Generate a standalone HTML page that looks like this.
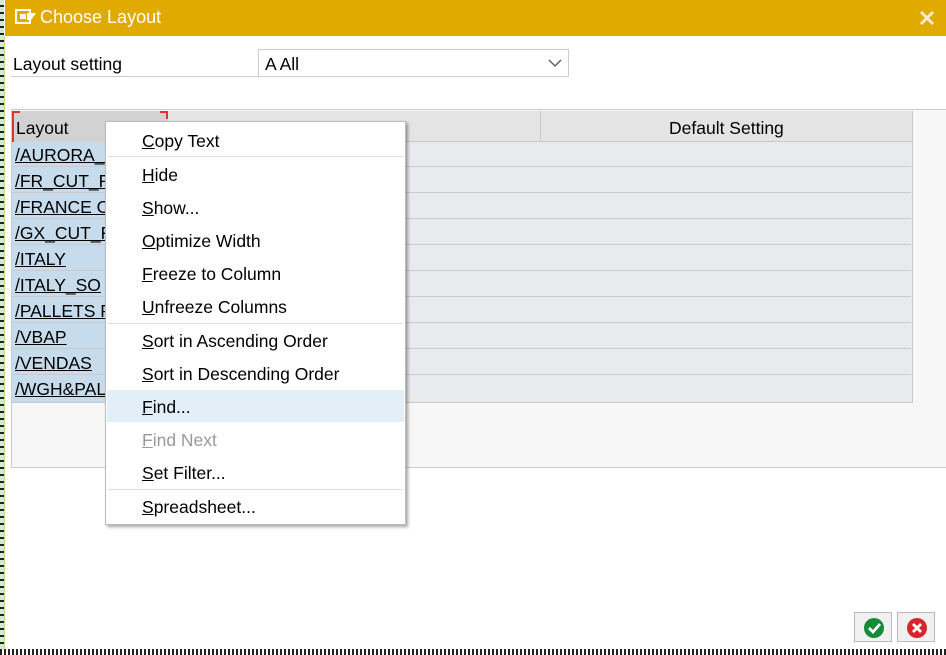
<!DOCTYPE html>
<html><head><meta charset="utf-8"><style>
*{margin:0;padding:0;box-sizing:border-box}
body{width:946px;height:655px;overflow:hidden;background:#fff;font-family:"Liberation Sans",Tahoma,sans-serif;font-size:17.5px;color:#000;position:relative}
.abs{position:absolute}
.strip{left:0;top:0;width:4px;height:655px;background:repeating-linear-gradient(#cfeccc 0 5px,#222 5px 7px);}
.strip2{left:4px;top:36px;width:1px;height:613px;background:#d8d080}
.bot{left:0;top:649px;width:946px;height:6px;background:repeating-linear-gradient(90deg,#222 0 2px,#fff 2px 4px)}
.dlg{left:5px;top:0;width:941px;height:649px;background:#fff}
.title{left:5px;top:0;width:941px;height:36px;background:#e0aa00;color:#fff;font-size:18px}
u{text-decoration:underline}
.row{position:absolute;left:0;height:26px;border-bottom:1px solid #c8cbd0}
.menu{left:105px;top:121px;width:301px;height:404px;background:#fff;border:1px solid #bbb;box-shadow:2px 2px 3px rgba(0,0,0,.35)}
.mi{position:absolute;left:36px}
.sep{position:absolute;left:2px;width:295px;height:1px;background:#ddd}
.btn{top:612px;width:38px;height:30px;background:#f0f0f0;border:1px solid #bbb}
</style></head><body>
<div class="abs strip"></div>
<div class="abs dlg"></div>
<div class="abs strip2"></div>
<div class="abs title">
  <svg class="abs" style="left:10px;top:9px" width="22" height="16"><rect x="1" y="1" width="14" height="13" fill="none" stroke="#fff" stroke-width="2"/><rect x="5" y="5" width="6" height="5" fill="#fff"/><path d="M12 4h9l-5 7h-4z" fill="#fff"/></svg>
  <span class="abs" style="left:35px;top:7px">Choose Layout</span>
  <svg class="abs" style="left:914px;top:10px" width="16" height="16"><path d="M2 2L14 14M14 2L2 14" stroke="#f4ead0" stroke-width="3"/></svg>
</div>
<div class="abs" style="left:13px;top:54px">Layout setting</div>
<div class="abs" style="left:11px;top:76px;width:247px;height:1px;background:#ccc"></div>
<div class="abs" style="left:258px;top:49px;width:311px;height:28px;border:1px solid #ccc;background:#fff">
  <span class="abs" style="left:6px;top:4px">A All</span>
  <svg class="abs" style="left:289px;top:9px" width="14" height="9"><path d="M1 1L7 7L13 1" fill="none" stroke="#555" stroke-width="1.3"/></svg>
</div>
<div class="abs" style="left:11px;top:109px;width:935px;height:359px;background:#f7f7f7;border:1px solid #ccc;border-right:none">
  <div class="abs" style="left:0;top:1px;width:900px;height:31px;background:#e4e4e4;border-bottom:1px solid #c8c8c8"></div>
  <div class="abs" style="left:0;top:1px;width:156px;height:31px;background:#d2d2d2"></div>
  <div class="abs" style="left:0;top:1px;width:8px;height:2px;background:#d33"></div>
  <div class="abs" style="left:0;top:1px;width:2px;height:31px;background:#d33"></div>
  <div class="abs" style="left:148px;top:1px;width:8px;height:2px;background:#d33"></div>
  <div class="abs" style="left:154px;top:1px;width:2px;height:8px;background:#d33"></div>
  <span class="abs" style="left:4px;top:8px">Layout</span>
  <span class="abs" style="left:657px;top:8px">Default Setting</span>
  <div class="abs" style="left:528px;top:1px;width:1px;height:291px;background:#c8c8c8"></div>
  <div class="abs" style="left:0;top:32px;width:900px;height:260px;background:#e8eaed"></div>
  <div class="abs" style="left:0;top:32px;width:156px;height:260px;background:#c6dcec"></div>
  <div class="abs" style="left:900px;top:1px;width:1px;height:291px;background:#c8c8c8"></div>
  <div class="abs" style="left:0;top:292px;width:901px;height:1px;background:#c8c8c8"></div>
</div>
<div class="abs" style="left:11px;top:141px;width:900px">
  <div class="row" style="top:0;width:900px"></div><div class="row" style="top:26px;width:900px"></div><div class="row" style="top:52px;width:900px"></div><div class="row" style="top:78px;width:900px"></div><div class="row" style="top:104px;width:900px"></div><div class="row" style="top:130px;width:900px"></div><div class="row" style="top:156px;width:900px"></div><div class="row" style="top:182px;width:900px"></div><div class="row" style="top:208px;width:900px"></div>
  <span class="abs" style="left:4px;top:4px"><u>/AURORA_I</u></span>
  <span class="abs" style="left:4px;top:30px"><u>/FR_CUT_R</u></span>
  <span class="abs" style="left:4px;top:56px"><u>/FRANCE O</u></span>
  <span class="abs" style="left:4px;top:82px"><u>/GX_CUT_F</u></span>
  <span class="abs" style="left:4px;top:108px"><u>/ITALY</u></span>
  <span class="abs" style="left:4px;top:134px"><u>/ITALY_SO</u></span>
  <span class="abs" style="left:4px;top:160px"><u>/PALLETS P</u></span>
  <span class="abs" style="left:4px;top:186px"><u>/VBAP</u></span>
  <span class="abs" style="left:4px;top:212px"><u>/VENDAS</u></span>
  <span class="abs" style="left:4px;top:238px"><u>/WGH&amp;PAL</u></span>
</div>
<div class="abs menu">
  <span class="mi" style="top:9px"><u>C</u>opy Text</span>
  <div class="sep" style="top:34px"></div>
  <span class="mi" style="top:43px"><u>H</u>ide</span>
  <span class="mi" style="top:76px"><u>S</u>how...</span>
  <span class="mi" style="top:109px"><u>O</u>ptimize Width</span>
  <span class="mi" style="top:142px"><u>F</u>reeze to Column</span>
  <span class="mi" style="top:175px"><u>U</u>nfreeze Columns</span>
  <div class="sep" style="top:201px"></div>
  <span class="mi" style="top:209px"><u>S</u>ort in Ascending Order</span>
  <span class="mi" style="top:242px"><u>S</u>ort in Descending Order</span>
  <div class="abs" style="left:1px;top:268px;width:297px;height:32px;background:#e3eff8"></div>
  <span class="mi" style="top:275px"><u>F</u>ind...</span>
  <span class="mi" style="top:308px;color:#999"><u>F</u>ind Next</span>
  <span class="mi" style="top:341px"><u>S</u>et Filter...</span>
  <div class="sep" style="top:367px"></div>
  <span class="mi" style="top:375px"><u>S</u>preadsheet...</span>
</div>
<div class="abs btn" style="left:854px">
  <svg class="abs" style="left:8px;top:4px" width="22" height="22"><circle cx="11" cy="11" r="10" fill="#178a3a"/><path d="M6 11l4 4 7-8" fill="none" stroke="#fff" stroke-width="2.8"/></svg>
</div>
<div class="abs btn" style="left:897px">
  <svg class="abs" style="left:8px;top:4px" width="22" height="22"><circle cx="11" cy="11" r="10" fill="#d9232e"/><path d="M7 7l8 8M15 7l-8 8" stroke="#fff" stroke-width="2.8"/></svg>
</div>
<div class="abs bot"></div>
</body></html>
